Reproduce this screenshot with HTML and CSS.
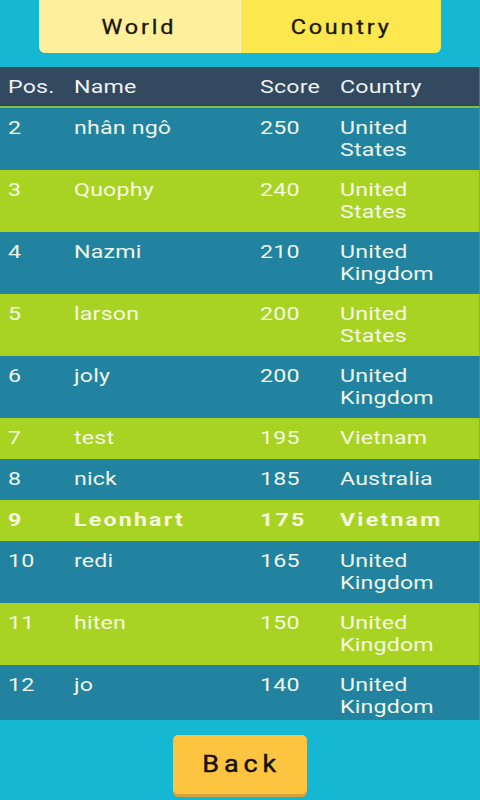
FILE: index.html
```
<!DOCTYPE html>
<html>
<head>
<meta charset="utf-8">
<link rel="stylesheet" href="styles.css">
</head>
<body>
<div class="screen">
  <div class="tabs">
    <div class="tab world"><span class="wide">World</span></div>
    <div class="tab country"><span class="wide">Country</span></div>
  </div>
  <div class="table">
    <div class="row head"><span class="c-pos">Pos.</span><span class="c-name">Name</span><span class="c-score">Score</span><span class="c-country">Country</span></div>
    <div class="body">
      <div class="row blue"><span class="c-pos">2</span><span class="c-name">nhân ngô</span><span class="c-score">250</span><span class="c-country">United<br>States</span></div>
      <div class="row green"><span class="c-pos">3</span><span class="c-name">Quophy</span><span class="c-score">240</span><span class="c-country">United<br>States</span></div>
      <div class="row blue"><span class="c-pos">4</span><span class="c-name">Nazmi</span><span class="c-score">210</span><span class="c-country">United<br>Kingdom</span></div>
      <div class="row green"><span class="c-pos">5</span><span class="c-name">larson</span><span class="c-score">200</span><span class="c-country">United<br>States</span></div>
      <div class="row blue"><span class="c-pos">6</span><span class="c-name">joly</span><span class="c-score">200</span><span class="c-country">United<br>Kingdom</span></div>
      <div class="row green"><span class="c-pos">7</span><span class="c-name">test</span><span class="c-score">195</span><span class="c-country">Vietnam</span></div>
      <div class="row blue"><span class="c-pos">8</span><span class="c-name">nick</span><span class="c-score">185</span><span class="c-country">Australia</span></div>
      <div class="row green me"><span class="c-pos">9</span><span class="c-name">Leonhart</span><span class="c-score">175</span><span class="c-country">Vietnam</span></div>
      <div class="row blue"><span class="c-pos">10</span><span class="c-name">redi</span><span class="c-score">165</span><span class="c-country">United<br>Kingdom</span></div>
      <div class="row green"><span class="c-pos">11</span><span class="c-name">hiten</span><span class="c-score">150</span><span class="c-country">United<br>Kingdom</span></div>
      <div class="row blue"><span class="c-pos">12</span><span class="c-name">jo</span><span class="c-score">140</span><span class="c-country">United<br>Kingdom</span></div>
    </div>
  </div>
  <div class="footer">
    <div class="back"><span class="wide">Back</span></div>
  </div>
</div>
</body>
</html>
```
FILE: styles.css
```
html, body {
  margin: 0;
  padding: 0;
}
body {
  background: #15b7d3;
  font-family: Roboto, "Liberation Sans", sans-serif;
}
.screen {
  width: 480px;
  height: 800px;
  display: flex;
  flex-direction: column;
  overflow: hidden;
}
/* the app's text is horizontally stretched */
.wide {
  display: inline-block;
  transform: scaleX(1.17);
}
.tabs {
  display: flex;
  margin: 0 39px;
  height: 53px;
  border-radius: 0 0 6px 6px;
  overflow: hidden;
  flex-shrink: 0;
}
.tab {
  flex: 1;
  display: flex;
  align-items: center;
  justify-content: center;
  font-size: 20px;
  letter-spacing: 2.4px;
  color: #1b1606;
  -webkit-text-stroke: 0.3px #1b1606;
}
.world {
  background: #fdef9b;
  border-right: 1px solid #fff6c8;
}
.country {
  background: #fce74f;
}
.table {
  margin-top: 14px;
  height: 653px;
  display: flex;
  flex-direction: column;
  overflow: hidden;
  flex-shrink: 0;
}
.body {
  overflow: hidden;
}
.row {
  display: flex;
  box-sizing: border-box;
  min-height: 41px;
  width: 393.44px;
  transform: scaleX(1.22);
  transform-origin: 0 0;
  padding: 9px 0;
  font-size: 19px;
  line-height: 22px;
  letter-spacing: 0.15px;
  color: #eef5e8;
}
.head {
  background: #33495f;
  min-height: 0;
  padding: 9px 0 8px;
  border-bottom: 2px solid #7fc04a;
  color: #eef2f4;
}
.blue {
  background: #21839f;
}
.green {
  background: #a9d323;
  color: #f4f8e0;
}
.me {
  font-weight: bold;
  letter-spacing: 1.8px;
}
.c-pos {
  width: 60.66px;
  padding-left: 6.56px;
  box-sizing: border-box;
  flex-shrink: 0;
}
.c-name {
  width: 152.46px;
  flex-shrink: 0;
}
.c-score {
  width: 65.57px;
  flex-shrink: 0;
}
.c-country {
  flex: 1;
}
.footer {
  flex: 1;
  display: flex;
  justify-content: center;
  padding-top: 15px;
}
.back {
  width: 134px;
  height: 59px;
  background: #fdc43f;
  border-radius: 5px;
  box-shadow: 0 3px 0 #d7a23b;
  display: flex;
  align-items: center;
  justify-content: center;
  font-size: 23px;
  letter-spacing: 4.2px;
  padding-left: 4px;
  box-sizing: border-box;
  color: #141008;
  -webkit-text-stroke: 0.4px #141008;
}
```
